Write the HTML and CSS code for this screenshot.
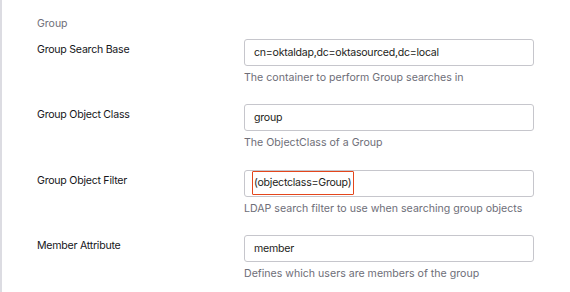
FILE: index.html
```html
<!DOCTYPE html>
<html lang="en">

<head>
    <meta charset="UTF-8">
    <meta name="viewport" content="width=device-width, initial-scale=1.0">
    <title>Group Settings</title>
    <link rel="stylesheet" href="styles.css">
</head>

<body>
    <section class="settings">
        <h3 class="settings-title">Group</h3>

        <div class="field-row">
            <label class="field-label" for="searchBase">Group Search Base</label>
            <div class="field-control">
                <div class="text-input" id="searchBase">cn=oktaldap,dc=oktasourced,dc=local</div>
                <p class="field-help">The container to perform Group searches in</p>
            </div>
        </div>

        <div class="field-row">
            <label class="field-label" for="objectClass">Group Object Class</label>
            <div class="field-control">
                <div class="text-input" id="objectClass">group</div>
                <p class="field-help">The ObjectClass of a Group</p>
            </div>
        </div>

        <div class="field-row">
            <label class="field-label" for="objectFilter">Group Object Filter</label>
            <div class="field-control">
                <div class="text-input" id="objectFilter"><span class="highlight">(objectclass=Group)</span></div>
                <p class="field-help">LDAP search filter to use when searching group objects</p>
            </div>
        </div>

        <div class="field-row">
            <label class="field-label" for="memberAttr">Member Attribute</label>
            <div class="field-control">
                <div class="text-input" id="memberAttr">member</div>
                <p class="field-help">Defines which users are members of the group</p>
            </div>
        </div>
    </section>
</body>

</html>
```

FILE: styles.css
```css
/* Reset styles */

* {
    margin: 0;
    padding: 0;
    box-sizing: border-box;
}

body {
    font-family: Inter, "Noto Sans", sans-serif;
    background-color: #fff;
    color: #1d1d21;
    border-left: 2px solid #dcdce2;
    min-height: 100vh;
}
/* Settings section */

.settings {
    padding: 17px 0 0 35px;
}

.settings-title {
    font-size: 10.5px;
    font-weight: normal;
    line-height: 14px;
    color: #6e6e78;
    margin-bottom: 8px;
}

.field-row {
    display: flex;
    margin-bottom: 20px;
}

.field-label {
    width: 207px;
    font-size: 10.6px;
    letter-spacing: -0.25px;
    line-height: 16px;
    padding-top: 3px;
    color: #16161a;
}

.field-control {
    width: 290px;
}

.text-input {
    height: 27px;
    border: 1px solid #c6c6cc;
    border-radius: 3px;
    padding: 0 9px;
    font-size: 10.6px;
    letter-spacing: -0.25px;
    line-height: 25px;
    white-space: nowrap;
}

.highlight {
    display: inline-block;
    vertical-align: top;
    line-height: 22px;
    margin-left: -2px;
    padding: 0 2px 0 1px;
    border: 1px solid #e4461c;
    border-radius: 1px;
}

.field-help {
    margin-top: 5px;
    font-size: 10.6px;
    line-height: 13.4px;
    color: #6e6e78;
}
```
